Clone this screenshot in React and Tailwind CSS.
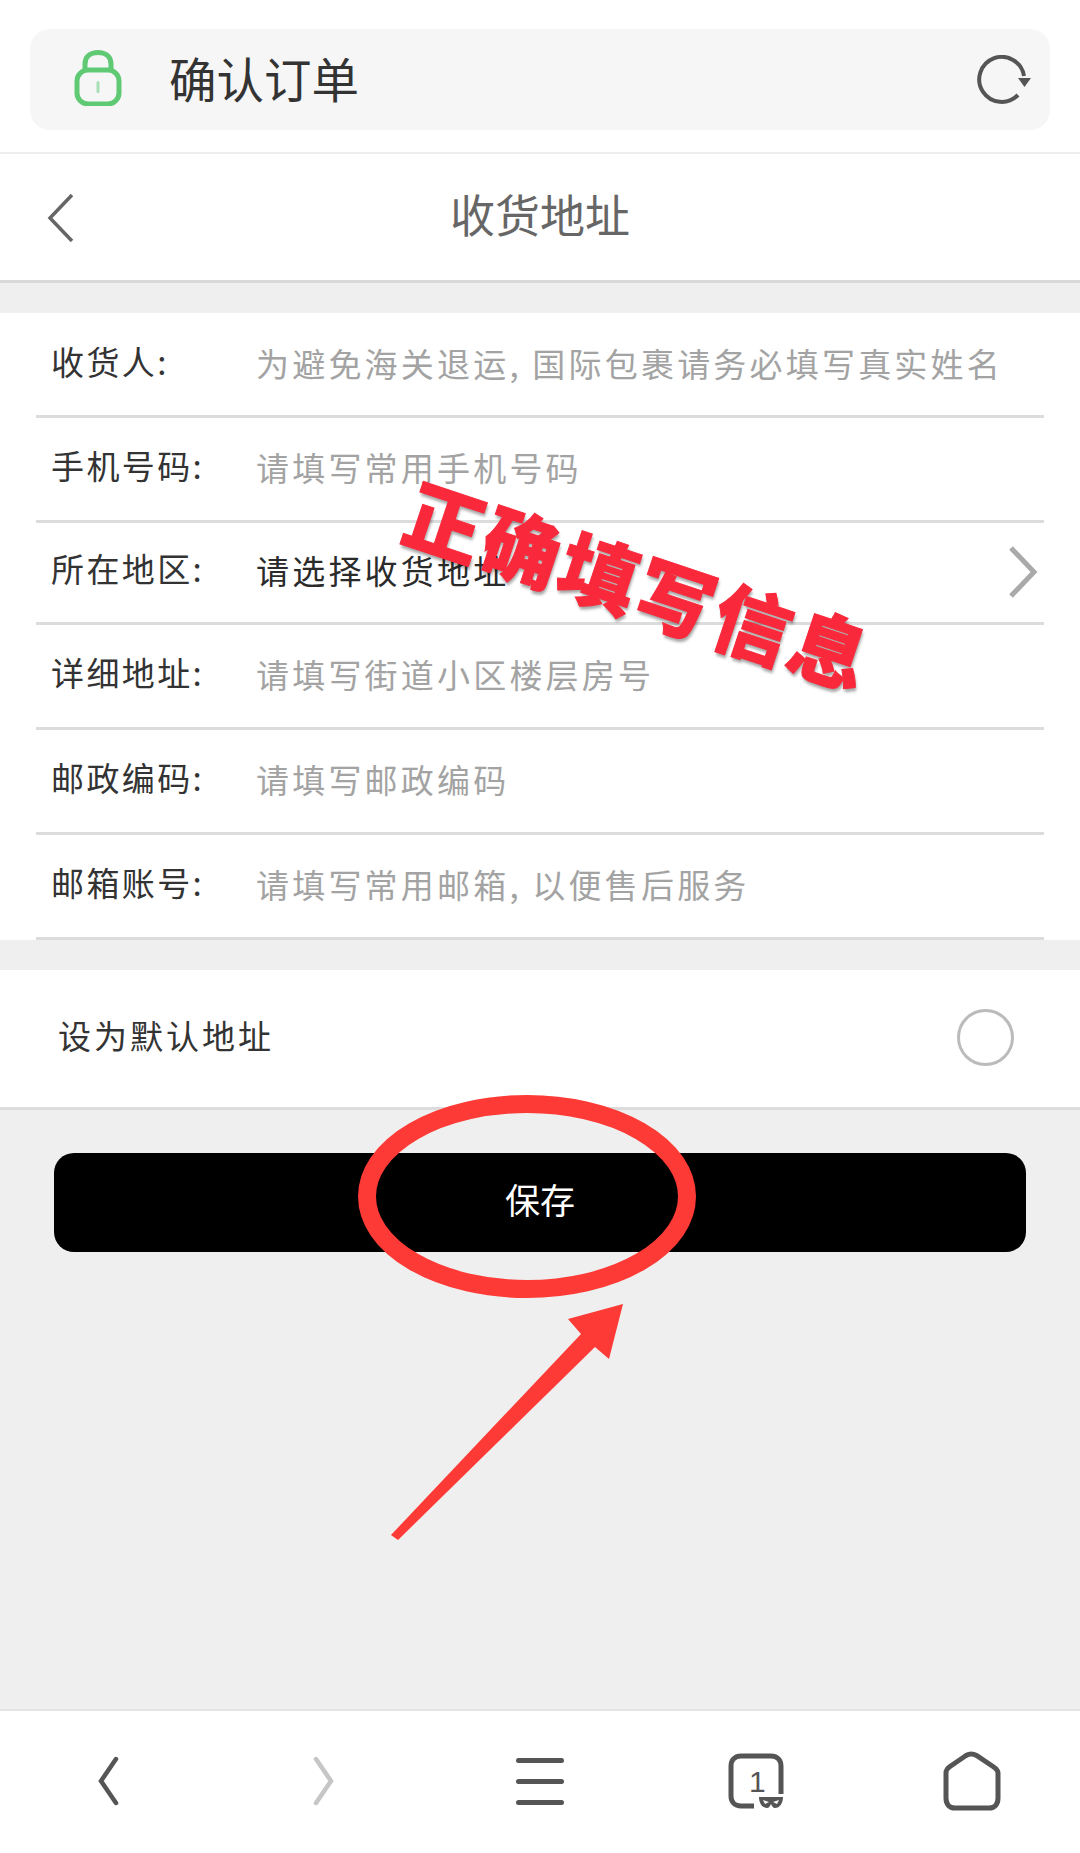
const fontStack = { fontFamily: '"Noto Sans CJK SC", "Noto Sans", sans-serif' };

const rows = [
    { label: '收货人:', value: '为避免海关退运, 国际包裹请务必填写真实姓名', height: 'h-[104.3px]' },
    { label: '手机号码:', value: '请填写常用手机号码', height: 'h-[104.3px]' },
    { label: '所在地区:', value: '请选择收货地址', height: 'h-[102.3px]', filled: true },
    { label: '详细地址:', value: '请填写街道小区楼层房号', height: 'h-[104.8px]' },
    { label: '邮政编码:', value: '请填写邮政编码', height: 'h-[105px]' },
    { label: '邮箱账号:', value: '请填写常用邮箱, 以便售后服务', height: 'h-[105.1px]' },
];

const Lock = () => (
    <svg width="48" height="56" viewBox="0 0 48 56" fill="none" className="shrink-0 mb-[4px]">
        <path d="M11 19V14C11 6.5 16.5 2.5 24 2.5S37 6.5 37 14V19" stroke="#5fc974" strokeWidth="5" />
        <rect x="3" y="20" width="42" height="34" rx="11" stroke="#5fc974" strokeWidth="5" />
        <rect x="22.5" y="31" width="3" height="12" rx="1.5" fill="#a9dfb4" />
    </svg>
);

const Refresh = () => (
    <svg width="54" height="50" viewBox="0 0 54 50" fill="none" className="shrink-0">
        <path d="M41 40A22.500 22.500 0 1 1 47 21" stroke="#555" strokeWidth="4" />
        <path d="M41 23H54L47.500 32Z" fill="#555" />
    </svg>
);

const Row = ({ label, value, filled, height }) => (
    <div className={`relative flex items-center ${height} mx-[36px] border-b-[3px] border-[#dcdcdc]`}>
        <div className="w-[220px] pl-[15px] pb-[7px] shrink-0 text-[33px] tracking-[2.4px] leading-none text-[#333]">
            {label}
        </div>
        <div className={`whitespace-nowrap text-[33px] tracking-[3.2px] leading-none pb-[3px] ${filled ? 'text-[#2b2b2b]' : 'text-[#a3a3a3]'}`}>
            {value}
        </div>
        {filled && (
            <svg width="32" height="54" viewBox="0 0 32 54" fill="none" className="ml-auto mr-[5px]">
                <path d="M4 3L27 27L4 51" stroke="#aaa" strokeWidth="5" />
            </svg>
        )}
    </div>
);

const TabsIcon = () => (
    <svg width="56" height="56" viewBox="0 0 56 56" fill="none">
        <path d="M26 53H13C7 53 3 49 3 43V13C3 7 7 3 13 3H43C49 3 53 7 53 13V41" stroke="#555" strokeWidth="5" />
        <text x="21" y="39" fontSize="30" fill="#555" style={{ fontFamily: '"Liberation Sans", sans-serif' }}>1</text>
        <path d="M31 44H55C55 50 52 55 47 55C45 55 44 53 43 51C42 53 41 55 39 55C34 55 31 50 31 44Z" fill="#555" />
        <path d="M35 47L41 49L37 51ZM51 47L45 49L49 51Z" fill="#fff" />
    </svg>
);

const HomeIcon = () => (
    <svg width="60" height="60" viewBox="0 0 60 60" fill="none">
        <path d="M4 22C4 19 5 17.500 8 15.500L24 4.500C27.500 2.500 31 2.500 34.500 4.500L51 15.500C54 17.500 56 19 56 22V47C56 53 53 57 47 57H13C7 57 4 53 4 47Z" stroke="#555" strokeWidth="5" />
    </svg>
);

const App = () => {
    return (
        <div className="relative w-[1080px] h-[1853px] flex flex-col overflow-hidden bg-[#efefef]" style={fontStack}>
            {/* browser address bar */}
            <div className="bg-white h-[152px] pt-[29px] px-[30px] shrink-0">
                <div className="flex items-center h-[101px] pl-[44px] pr-[19px] bg-[#f6f6f6] rounded-[20px]">
                    <Lock />
                    <div className="ml-[47px] text-[47.5px] leading-none text-[#333] pb-[3px]">确认订单</div>
                    <div className="ml-auto"><Refresh /></div>
                </div>
            </div>

            {/* page header */}
            <div className="relative flex items-center justify-center h-[131px] bg-white border-t-2 border-[#eee] border-b-[3px] border-b-[#d9d9d9] shrink-0">
                <svg width="28" height="50" viewBox="0 0 28 50" fill="none" className="absolute left-[47px] top-[39px]">
                    <path d="M25 2L3 25L25 48" stroke="#666" strokeWidth="3.500" />
                </svg>
                <div className="text-[45px] leading-none text-[#666] pb-[8px]">收货地址</div>
            </div>

            {/* address form */}
            <div className="mt-[30px] bg-white pt-[1px] shrink-0">
                {rows.map((row) => (
                    <Row key={row.label} {...row} />
                ))}
            </div>

            {/* default address toggle */}
            <div className="mt-[30px] flex items-center h-[140px] pl-[58px] pr-[66px] bg-white border-b-[3px] border-[#dcdcdc] shrink-0">
                <div className="text-[33px] tracking-[3px] leading-none text-[#333] pb-[5px]">设为默认地址</div>
                <div className="ml-auto w-[57px] h-[57px] rounded-full border-[3px] border-[#bbb] mb-[1px]" />
            </div>

            {/* save */}
            <div className="px-[54px] pt-[43px] grow">
                <div className="flex items-center justify-center h-[99px] bg-black rounded-[20px] text-[35px] leading-none text-white pb-[7px]">
                    保存
                </div>
            </div>

            {/* browser toolbar */}
            <div className="grid grid-cols-5 items-center h-[144px] bg-white border-t-2 border-[#e4e4e4] shrink-0 pb-[2px]">
                <div className="flex justify-center">
                    <svg width="24" height="50" viewBox="0 0 24 50" fill="none">
                        <path d="M20 3L5 25L20 47" stroke="#555" strokeWidth="4.500" strokeLinecap="round" />
                    </svg>
                </div>
                <div className="flex justify-center">
                    <svg width="24" height="50" viewBox="0 0 24 50" fill="none">
                        <path d="M4 3L19 25L4 47" stroke="#c6c6c6" strokeWidth="4.500" strokeLinecap="round" />
                    </svg>
                </div>
                <div className="flex flex-col items-center gap-[16px]">
                    <div className="w-[48px] h-[5px] rounded-full bg-[#555]" />
                    <div className="w-[48px] h-[5px] rounded-full bg-[#555]" />
                    <div className="w-[48px] h-[5px] rounded-full bg-[#555]" />
                </div>
                <div className="flex justify-center"><TabsIcon /></div>
                <div className="flex justify-center"><HomeIcon /></div>
            </div>

            {/* annotations drawn over the screenshot */}
            <div className="absolute left-[397px] top-[543px] w-[480px] text-center whitespace-nowrap rotate-[18.4deg] text-[78px] tracking-[3px] leading-none font-black text-[#f9293b] [-webkit-text-stroke:1px_#f9293b] [text-shadow:2px_3px_3px_rgba(0,0,0,0.35)]">
                正确填写信息
            </div>
            <svg width="1080" height="1853" viewBox="0 0 1080 1853" fill="none" className="absolute left-0 top-0 pointer-events-none">
                <ellipse cx="527" cy="1196.500" rx="160" ry="92.500" stroke="#fd3a35" strokeWidth="18" />
                <path d="M391 1535L398 1540L595 1347L609 1359L623 1304L568 1319L581 1334Z" fill="#fd3a35" />
            </svg>
        </div>
    );
};

export default App;
